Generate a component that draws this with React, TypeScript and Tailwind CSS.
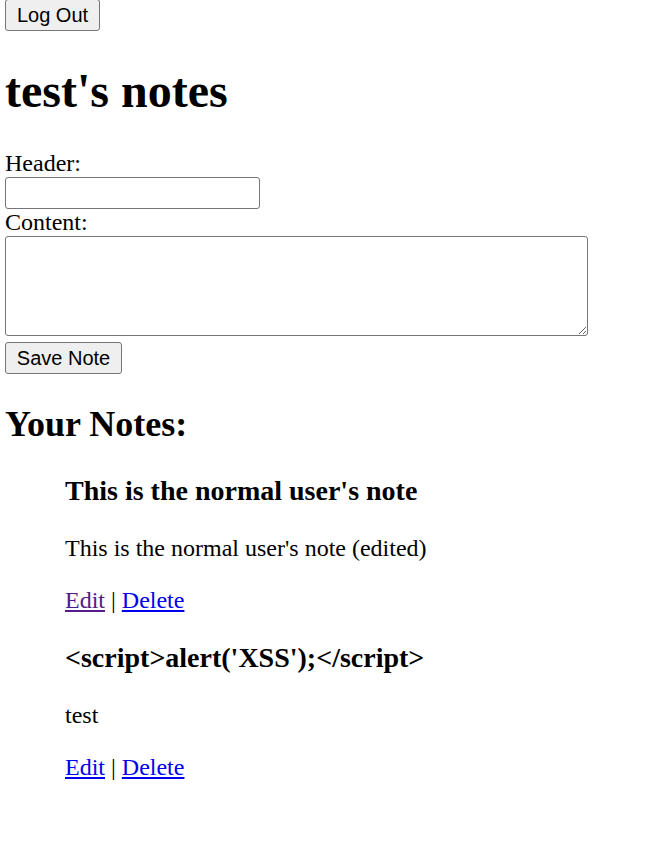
const notes = [
  {
    title: "This is the normal user's note",
    body: "This is the normal user's note (edited)",
    editVisited: true,
  },
  {
    title: "<script>alert('XSS');</script>",
    body: "test",
    editVisited: false,
  },
];

const btn =
  "flex items-center justify-center whitespace-nowrap h-[32px] px-0 bg-[#efefef] border border-[#767676] rounded-[3px] text-[20px] leading-[23px] font-['Liberation_Sans',Arial,sans-serif] text-black";

export default function App() {
  return (
    <div className="min-h-screen bg-white pl-[5px] text-black text-[24px] leading-[27px] font-['Liberation_Serif','Times_New_Roman',serif]">
      <button className={`${btn} mt-[-1px] w-[95px]`}>Log Out</button>

      <h1 className="mt-[32px] mb-[32px] text-[48px] leading-[55px] font-bold">
        test's notes
      </h1>

      <form className="block" onSubmit={(e) => e.preventDefault()}>
        <label className="block leading-[27px]">Header:</label>
        <input
          type="text"
          className="block w-[255px] h-[32px] border border-[#767676] rounded-[3px] px-[3px] text-[20px]"
        />
        <label className="block leading-[27px]">Content:</label>
        <textarea className="block w-[583px] h-[100px] border border-[#767676] rounded-[3px] resize p-[3px] text-[20px]" />
        <button type="submit" className={`${btn} mt-[6px] w-[117px]`}>
          Save Note
        </button>
      </form>

      <h2 className="mt-[30px] mb-[30px] text-[36px] leading-[41px] font-bold">
        Your Notes:
      </h2>

      <ul className="pl-[60px] list-none">
        {notes.map((n, i) => (
          <li key={i}>
            <h3 className="mt-[28px] mb-[28px] text-[28px] leading-[32px] font-bold">
              {n.title}
            </h3>
            <p className="my-[24px] leading-[27.5px]">{n.body}</p>
            <p className="my-[24px] leading-[27.5px]">
              <a
                href="#"
                className={`underline ${n.editVisited ? "text-[#551a8b]" : "text-[#0000ee]"}`}
              >
                Edit
              </a>{" "}
              |{" "}
              <a href="#" className="underline text-[#0000ee]">
                Delete
              </a>
            </p>
          </li>
        ))}
      </ul>
    </div>
  );
}
